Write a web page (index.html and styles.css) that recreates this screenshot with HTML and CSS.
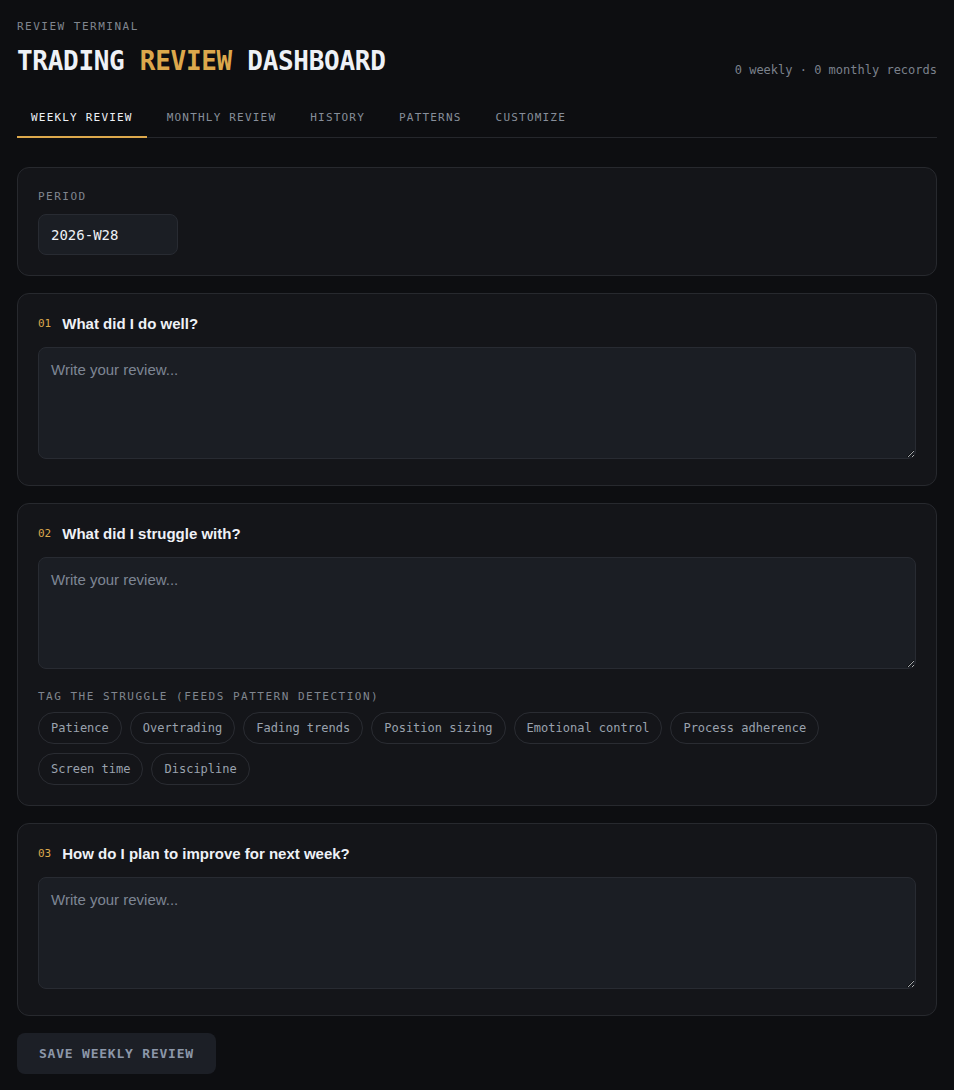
FILE: index.html
```html
<!DOCTYPE html>
<html lang="en">
<head>
    <meta charset="UTF-8">
    <meta name="viewport" content="width=device-width, initial-scale=1.0">
    <title>Trading Review Dashboard</title>
    <link rel="stylesheet" href="styles.css">
</head>
<body>
<div class="page">
    <header class="header">
        <div>
            <div class="eyebrow">REVIEW TERMINAL</div>
            <h1 class="title">TRADING <span class="accent">REVIEW</span> DASHBOARD</h1>
        </div>
        <div class="records">0 weekly · 0 monthly records</div>
    </header>

    <nav class="tabs">
        <button class="tab active">WEEKLY REVIEW</button>
        <button class="tab">MONTHLY REVIEW</button>
        <button class="tab">HISTORY</button>
        <button class="tab">PATTERNS</button>
        <button class="tab">CUSTOMIZE</button>
    </nav>

    <main class="form">
        <section class="card">
            <label class="label" for="period">PERIOD</label>
            <input id="period" class="period" type="text" value="2026-W28">
        </section>

        <section class="card">
            <h2 class="question"><span class="num">01</span>What did I do well?</h2>
            <textarea class="answer" placeholder="Write your review..."></textarea>
        </section>

        <section class="card">
            <h2 class="question"><span class="num">02</span>What did I struggle with?</h2>
            <textarea class="answer" placeholder="Write your review..."></textarea>
            <div class="tag-section">
                <div class="label">TAG THE STRUGGLE (FEEDS PATTERN DETECTION)</div>
                <div class="tags">
                    <button class="tag">Patience</button>
                    <button class="tag">Overtrading</button>
                    <button class="tag">Fading trends</button>
                    <button class="tag">Position sizing</button>
                    <button class="tag">Emotional control</button>
                    <button class="tag">Process adherence</button>
                    <button class="tag">Screen time</button>
                    <button class="tag">Discipline</button>
                </div>
            </div>
        </section>

        <section class="card">
            <h2 class="question"><span class="num">03</span>How do I plan to improve for next week?</h2>
            <textarea class="answer" placeholder="Write your review..."></textarea>
        </section>

        <div>
            <button class="save">SAVE WEEKLY REVIEW</button>
        </div>
    </main>
</div>
</body>
</html>
```

FILE: styles.css
```css
body {
    background-color: #0d0e11;
    margin: 0;
    font-family: "Liberation Sans", Arial, sans-serif;
    color: #e9edf3;
}

.page {
    padding: 20px 17px 17px;
}

.header {
    display: flex;
    justify-content: space-between;
    align-items: flex-end;
    margin-bottom: 22px;
}

.eyebrow,
.label {
    display: block;
    font-family: "DejaVu Sans Mono", monospace;
    font-size: 11px;
    line-height: 14px;
    letter-spacing: 1.5px;
    color: #80868f;
}

.eyebrow {
    margin-bottom: 11px;
}

.title {
    margin: 0;
    font-family: "DejaVu Sans Mono", monospace;
    font-size: 26px;
    line-height: 32px;
    letter-spacing: -0.3px;
    font-weight: bold;
    color: #eef1f6;
}

.accent {
    color: #dca84c;
}

.records {
    margin-bottom: -1px;
    font-family: "DejaVu Sans Mono", monospace;
    font-size: 12px;
    line-height: 16px;
    color: #7b818c;
}

.tabs {
    display: flex;
    gap: 6px;
    border-bottom: 1px solid #25272c;
    margin-bottom: 29px;
}

.tab {
    background: none;
    border: none;
    border-bottom: 2px solid transparent;
    margin-bottom: -1px;
    padding: 12px 14px 11px;
    font-family: "DejaVu Sans Mono", monospace;
    font-size: 11px;
    line-height: 14px;
    letter-spacing: 1.2px;
    color: #878e9a;
    cursor: pointer;
}

.tab.active {
    color: #eef1f6;
    border-bottom-color: #dca84c;
}

.form {
    display: flex;
    flex-direction: column;
    gap: 17px;
}

.card {
    background-color: #141519;
    border: 1px solid #27292e;
    border-radius: 12px;
    padding: 20px;
}

.card > .label {
    margin: 2px 0 10px;
}

.period {
    display: block;
    box-sizing: border-box;
    width: 140px;
    height: 41px;
    padding: 10px 12px;
    background-color: #1b1e24;
    border: 1px solid #282b32;
    border-radius: 8px;
    font-family: "DejaVu Sans Mono", monospace;
    font-size: 14px;
    color: #eef1f6;
    outline: none;
}

.question {
    display: flex;
    align-items: center;
    gap: 11px;
    margin: 0 0 13px;
    font-size: 15px;
    line-height: 20px;
    font-weight: bold;
    color: #eef1f6;
}

.num {
    font-family: "DejaVu Sans Mono", monospace;
    font-size: 11px;
    font-weight: normal;
    color: #dca84c;
}

.answer {
    display: block;
    box-sizing: border-box;
    width: 100%;
    height: 112px;
    margin-bottom: 6px;
    padding: 12px;
    background-color: #1b1e24;
    border: 1px solid #282b32;
    border-radius: 8px;
    font-family: "Liberation Sans", Arial, sans-serif;
    font-size: 15px;
    line-height: 20px;
    color: #e9edf3;
    outline: none;
}

.answer::placeholder {
    color: #7e8694;
}

.tag-section {
    margin-top: 21px;
}

.tag-section .label {
    margin-bottom: 8px;
}

.tags {
    display: flex;
    flex-wrap: wrap;
    gap: 9px 8px;
}

.tag {
    background: none;
    border: 1px solid #2a2c32;
    border-radius: 999px;
    padding: 7px 12px;
    font-family: "DejaVu Sans Mono", monospace;
    font-size: 12px;
    line-height: 16px;
    color: #9aa2ae;
    cursor: pointer;
}

.save {
    background-color: #1c1f26;
    border: none;
    border-radius: 8px;
    padding: 12px 22px;
    font-family: "DejaVu Sans Mono", monospace;
    font-size: 13px;
    line-height: 17px;
    font-weight: bold;
    letter-spacing: 0.06em;
    color: #8c97a9;
    cursor: pointer;
}
```
